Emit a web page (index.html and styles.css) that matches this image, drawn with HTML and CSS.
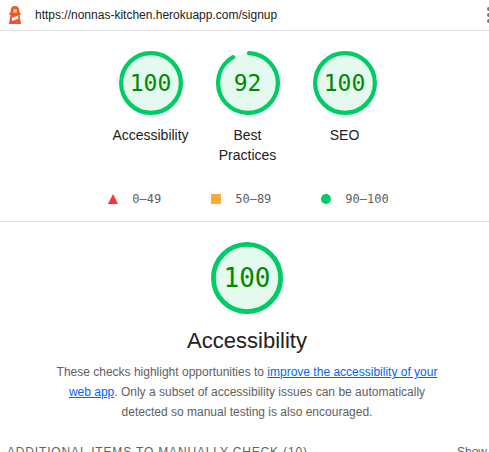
FILE: index.html
```html
<!DOCTYPE html>
<html lang="en">
<head>
<meta charset="utf-8">
<meta name="viewport" content="width=device-width, initial-scale=1">
<title>Lighthouse Report</title>
<link rel="stylesheet" href="styles.css">
</head>
<body>
<div class="report">
  <header class="topbar">
    <svg class="topbar-logo" viewBox="0 0 24 24" aria-hidden="true">
      <path fill="#f4512c" d="M12 3c2.600 0 4 1.600 4.300 3.600V9.500H17.500v2.500H16.500L18 21H6l1.500-9H6.500V9.500H7.700V6.600C8 4.600 9.400 3 12 3z"/>
      <path fill="#ffd766" d="M10.300 6.300h3.600v3.500h-3.600z"/>
      <path fill="#fff" d="m9 14.800 6-2.300.4 3.200L9 18z"/>
    </svg>
    <a class="topbar-url" href="https://nonnas-kitchen.herokuapp.com/signup">https://nonnas-kitchen.herokuapp.com/signup</a>
    <button class="topbar-menu" type="button" aria-label="Tools menu">
      <svg viewBox="0 0 24 24" aria-hidden="true"><circle cx="12" cy="6" r="2"/><circle cx="12" cy="12" r="2"/><circle cx="12" cy="18" r="2"/></svg>
    </button>
  </header>
  <main>
    <section class="summary">
      <div class="scores">
        <a class="score" href="#accessibility">
          <span class="gauge">
            <svg viewBox="0 0 120 120" aria-hidden="true"><circle class="gauge-base" cx="60" cy="60" r="56"/><circle class="gauge-arc" cx="60" cy="60" r="56"/></svg>
            <span class="gauge-value">100</span>
          </span>
          <span class="score-label">Accessibility</span>
        </a>
        <a class="score" href="#best-practices">
          <span class="gauge">
            <svg viewBox="0 0 120 120" aria-hidden="true"><circle class="gauge-base" cx="60" cy="60" r="56"/><circle class="gauge-arc" cx="60" cy="60" r="56" transform="rotate(-88 60 60)" stroke-dasharray="320 352"/></svg>
            <span class="gauge-value">92</span>
          </span>
          <span class="score-label">Best Practices</span>
        </a>
        <a class="score" href="#seo">
          <span class="gauge">
            <svg viewBox="0 0 120 120" aria-hidden="true"><circle class="gauge-base" cx="60" cy="60" r="56"/><circle class="gauge-arc" cx="60" cy="60" r="56"/></svg>
            <span class="gauge-value">100</span>
          </span>
          <span class="score-label">SEO</span>
        </a>
      </div>
      <div class="scale">
        <span class="range"><svg viewBox="0 0 10 10" aria-hidden="true"><path fill="#f33" d="M5 0 10 10H0z"/></svg>0–49</span>
        <span class="range"><svg viewBox="0 0 10 10" aria-hidden="true"><path fill="#fa3" d="M0 0h10v10H0z"/></svg>50–89</span>
        <span class="range"><svg viewBox="0 0 10 10" aria-hidden="true"><circle fill="#0c6" cx="5" cy="5" r="5"/></svg>90–100</span>
      </div>
    </section>
    <section class="category" id="accessibility">
      <div class="gauge gauge-large">
        <svg viewBox="0 0 120 120" aria-hidden="true"><circle class="gauge-base" cx="60" cy="60" r="56"/><circle class="gauge-arc" cx="60" cy="60" r="56"/></svg>
        <span class="gauge-value">100</span>
      </div>
      <h1 class="category-title">Accessibility</h1>
      <p class="category-text">These checks highlight opportunities to <a href="#improve">improve the accessibility of your web app</a>. Only a subset of accessibility issues can be automatically detected so manual testing is also encouraged.</p>
      <div class="group">
        <h2 class="group-title">Additional items to manually check (10)</h2>
        <button class="group-toggle" type="button">Show</button>
      </div>
    </section>
  </main>
</div>
</body>
</html>
```
FILE: styles.css
```css
* {
  box-sizing: border-box;
}

body {
  margin: 0;
  background: #fff;
  color: #212121;
  font: 14px/20px "Liberation Sans", Arial, sans-serif;
}

.report {
  height: 100vh;
  overflow: hidden;
}

.topbar {
  display: flex;
  align-items: center;
  height: 31px;
  padding-left: 3px;
  border-bottom: 1px solid #e0e0e0;
}

.topbar-logo {
  width: 24px;
  height: 24px;
}

.topbar-url {
  margin-left: 8px;
  color: #212121;
  font-size: 12px;
  text-decoration: none;
}

.topbar-menu {
  width: 24px;
  height: 24px;
  margin: 0 -12px 0 auto;
  padding: 0;
  border: 0;
  background: none;
  fill: #757575;
}

.topbar-menu svg {
  display: block;
}

.summary {
  padding: 20px 0 12px 6px;
  border-bottom: 1px solid #e0e0e0;
}

.scores {
  display: flex;
  justify-content: center;
}

.score {
  display: flex;
  flex-direction: column;
  align-items: center;
  gap: 10px;
  width: 97px;
  padding: 0 10px;
  color: #212121;
  text-align: center;
  text-decoration: none;
}

.gauge {
  display: grid;
  place-items: center;
  width: 64px;
  height: 64px;
  font: 23px/24px "DejaVu Sans Mono", monospace;
  color: #080;
}

.gauge svg,
.gauge-value {
  grid-area: 1 / 1;
}

.gauge svg {
  display: block;
  width: 100%;
}

.gauge-base {
  fill: #0c6;
  opacity: 0.1;
}

.gauge-arc {
  fill: none;
  stroke: #0c6;
  stroke-width: 8px;
  stroke-linecap: round;
}

.gauge-large {
  width: 72px;
  height: 72px;
  margin: 0 auto;
  font-size: 26px;
}

.scale {
  display: flex;
  justify-content: center;
  gap: 50px;
  margin-top: 24px;
  padding-left: 2px;
  color: #616161;
  font: 12px/20px "DejaVu Sans Mono", monospace;
}

.range {
  display: flex;
  align-items: center;
  gap: 14px;
}

.range svg {
  width: 10px;
  height: 10px;
}

.category {
  padding: 20px 0 0 5px;
}

.category-title {
  margin: 12px 0 6px;
  font-size: 22px;
  font-weight: 400;
  line-height: 30px;
  text-align: center;
}

.category-text {
  margin: 0 48px;
  color: #616161;
  font-size: 12px;
  text-align: center;
}

.category-text a {
  color: #06f;
}

.group {
  display: flex;
  justify-content: space-between;
  margin-top: 20px;
  padding: 0 2px;
  color: #616161;
}

.group-title {
  margin: 0;
  font-size: 12px;
  font-weight: 400;
  letter-spacing: 0.07em;
  text-transform: uppercase;
}

.group-toggle {
  padding: 0;
  border: 0;
  background: none;
  color: inherit;
  font: 12px/20px "Liberation Sans", Arial, sans-serif;
}
```
